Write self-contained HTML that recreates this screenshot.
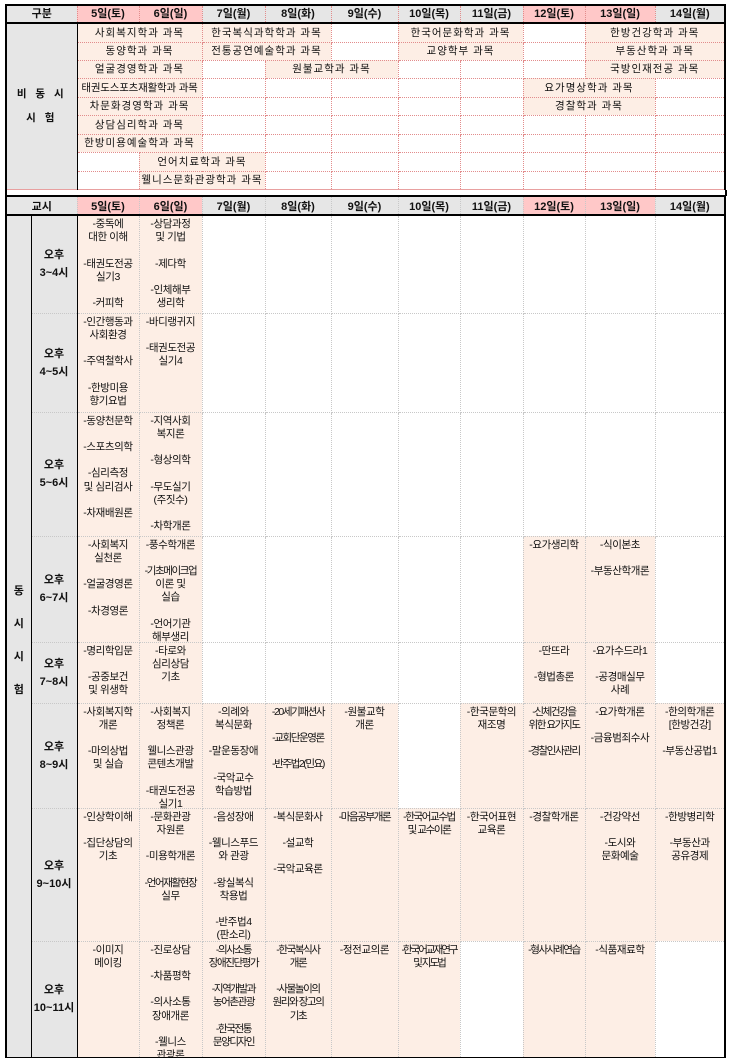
<!DOCTYPE html>
<html><head><meta charset="utf-8">
<style>
html,body{margin:0;padding:0;background:#fff;width:729px;height:1058px;overflow:hidden;position:relative}
body{font-family:"Liberation Sans","Noto Sans CJK KR",sans-serif;color:#111}
table{border-collapse:collapse;table-layout:fixed;position:absolute;left:5px;width:720px}
td{padding:0;text-align:center;white-space:nowrap;overflow:visible;font-size:10.5px}
.top td{border-top:1px dotted #e28c8c;border-bottom:1px dotted #e28c8c;border-left:1px dotted #e28c8c;border-right:1px dotted #e28c8c;vertical-align:middle;letter-spacing:1px;font-size:10.5px;line-height:12px}
.top{border:2px solid #000;border-bottom:1px solid #e8a0a0;top:4px}
.bot{border:2px solid #000;top:195px}
.bot td{border:1px dotted #c8c8c8;vertical-align:top}
.h td{font-weight:bold;font-size:11px;background:#e6e6e6;vertical-align:middle;border-bottom:2px solid #000;letter-spacing:0}
.h td.p{background:#ffc8c8}
.s{background:#fdeee5}
.lbl{background:#e6e6e6;font-weight:bold;border-right:1.5px solid #000 !important;letter-spacing:3px !important;line-height:24px !important;font-size:11px}
.c{height:0;overflow:visible;line-height:13.2px;padding-top:2px;letter-spacing:-0.4px}
.n{letter-spacing:-1.4px}
.t{background:#e6e6e6;font-weight:bold;font-size:11px;line-height:18px;vertical-align:middle !important;border-left:1.5px solid #000 !important;border-right:1.5px solid #000 !important}
.v{background:#e6e6e6;font-weight:bold;font-size:11px;line-height:33px;vertical-align:middle !important;padding-top:8px !important}
.gap{position:absolute;left:5px;top:190px;width:718px;height:6px;border-left:2px solid #000;border-right:2px solid #000}
</style></head><body>
<table class="top">
<colgroup><col style="width:71px"><col style="width:62px"><col style="width:63px"><col style="width:63px"><col style="width:66px"><col style="width:67px"><col style="width:62px"><col style="width:63px"><col style="width:62px"><col style="width:70px"><col style="width:70px"></colgroup>
<tr class="h" style="height:18px"><td>구분</td><td class="p">5일(토)</td><td class="p">6일(일)</td><td>7일(월)</td><td>8일(화)</td><td>9일(수)</td><td>10일(목)</td><td>11일(금)</td><td class="p">12일(토)</td><td class="p">13일(일)</td><td>14일(월)</td></tr>
<tr style="height:19px"><td rowspan="9" class="lbl">비 동 시<br>시 험</td><td colspan="2" class="s">사회복지학과 과목</td><td colspan="2" class="s">한국복식과학학과 과목</td><td></td><td colspan="2" class="s">한국어문화학과 과목</td><td></td><td colspan="2" class="s">한방건강학과 과목</td></tr>
<tr style="height:18px"><td colspan="2" class="s">동양학과 과목</td><td colspan="2" class="s">전통공연예술학과 과목</td><td></td><td colspan="2" class="s">교양학부 과목</td><td></td><td colspan="2" class="s">부동산학과 과목</td></tr>
<tr style="height:18px"><td colspan="2" class="s">얼굴경영학과 과목</td><td></td><td colspan="2" class="s">원불교학과 과목</td><td></td><td></td><td></td><td colspan="2" class="s">국방인재전공 과목</td></tr>
<tr style="height:19px"><td colspan="2" class="s" style="letter-spacing:-0.2px">태권도스포츠재활학과 과목</td><td></td><td></td><td></td><td></td><td></td><td colspan="2" class="s">요가명상학과 과목</td><td></td></tr>
<tr style="height:18px"><td colspan="2" class="s">차문화경영학과 과목</td><td></td><td></td><td></td><td></td><td></td><td colspan="2" class="s">경찰학과 과목</td><td></td></tr>
<tr style="height:19px"><td colspan="2" class="s">상담심리학과 과목</td><td></td><td></td><td></td><td></td><td></td><td></td><td></td><td></td></tr>
<tr style="height:18px"><td colspan="2" class="s">한방미용예술학과 과목</td><td></td><td></td><td></td><td></td><td></td><td></td><td></td><td></td></tr>
<tr style="height:19px"><td></td><td colspan="2" class="s">언어치료학과 과목</td><td></td><td></td><td></td><td></td><td></td><td></td><td></td></tr>
<tr style="height:18px"><td></td><td colspan="2" class="s">웰니스문화관광학과 과목</td><td></td><td></td><td></td><td></td><td></td><td></td><td></td></tr>
</table>
<div class="gap"></div>
<table class="bot">
<colgroup><col style="width:25px"><col style="width:46px"><col style="width:62px"><col style="width:63px"><col style="width:63px"><col style="width:66px"><col style="width:67px"><col style="width:62px"><col style="width:63px"><col style="width:62px"><col style="width:70px"><col style="width:70px"></colgroup>
<tr class="h" style="height:19px"><td colspan="2">교시</td><td class="p">5일(토)</td><td class="p">6일(일)</td><td>7일(월)</td><td>8일(화)</td><td>9일(수)</td><td>10일(목)</td><td>11일(금)</td><td class="p">12일(토)</td><td class="p">13일(일)</td><td>14일(월)</td></tr>
<tr style="height:98px"><td rowspan="8" class="v">동<br>시<br>시<br>험</td><td class="t">오후<br>3~4시</td>
<td class="s"><div class="c">-중독에<br>대한 이해<br><br>-태권도전공<br>실기3<br><br>-커피학</div></td>
<td class="s"><div class="c">-상담과정<br>및 기법<br><br>-제다학<br><br>-인체해부<br>생리학</div></td>
<td></td><td></td><td></td><td></td><td></td><td></td><td></td><td></td></tr>
<tr style="height:99px"><td class="t">오후<br>4~5시</td>
<td class="s"><div class="c">-인간행동과<br>사회환경<br><br>-주역철학사<br><br>-한방미용<br>향기요법</div></td>
<td class="s"><div class="c">-바디랭귀지<br><br>-태권도전공<br>실기4</div></td>
<td></td><td></td><td></td><td></td><td></td><td></td><td></td><td></td></tr>
<tr style="height:124px"><td class="t">오후<br>5~6시</td>
<td class="s"><div class="c">-동양천문학<br><br>-스포츠의학<br><br>-심리측정<br>및 심리검사<br><br>-차재배원론</div></td>
<td class="s"><div class="c">-지역사회<br>복지론<br><br>-형상의학<br><br>-무도실기<br>(주짓수)<br><br>-차학개론</div></td>
<td></td><td></td><td></td><td></td><td></td><td></td><td></td><td></td></tr>
<tr style="height:106px"><td class="t">오후<br>6~7시</td>
<td class="s"><div class="c">-사회복지<br>실천론<br><br>-얼굴경영론<br><br>-차경영론</div></td>
<td class="s"><div class="c">-풍수학개론<br><br><span class="n">-기초메이크업</span><br>이론 및<br>실습<br><br>-언어기관<br>해부생리</div></td>
<td></td><td></td><td></td><td></td><td></td>
<td class="s"><div class="c">-요가생리학</div></td>
<td class="s"><div class="c">-식이본초<br><br>-부동산학개론</div></td>
<td></td></tr>
<tr style="height:61px"><td class="t">오후<br>7~8시</td>
<td class="s"><div class="c">-명리학입문<br><br>-공중보건<br>및 위생학</div></td>
<td class="s"><div class="c">-타로와<br>심리상담<br>기초</div></td>
<td></td><td></td><td></td><td></td><td></td>
<td class="s"><div class="c">-딴뜨라<br><br>-형법총론</div></td>
<td class="s"><div class="c">-요가수드라1<br><br>-공경매실무<br>사례</div></td>
<td></td></tr>
<tr style="height:105px"><td class="t">오후<br>8~9시</td>
<td class="s"><div class="c">-사회복지학<br>개론<br><br>-마의상법<br>및 실습</div></td>
<td class="s"><div class="c">-사회복지<br>정책론<br><br>웰니스관광<br>콘텐츠개발<br><br>-태권도전공<br>실기1</div></td>
<td class="s"><div class="c">-의례와<br>복식문화<br><br>-말운동장애<br><br>-국악교수<br>학습방법</div></td>
<td class="s"><div class="c n">-20세기패션사<br><br>-교회단운영론<br><br>-반주법2(민요)</div></td>
<td class="s"><div class="c">-원불교학<br>개론</div></td>
<td></td>
<td class="s"><div class="c">-한국문학의<br>재조명</div></td>
<td class="s"><div class="c n">-신체건강을<br>위한 요가지도<br><br>-경찰인사관리</div></td>
<td class="s"><div class="c">-요가학개론<br><br>-금융범죄수사</div></td>
<td class="s"><div class="c">-한의학개론<br>[한방건강]<br><br>-부동산공법1</div></td></tr>
<tr style="height:133px"><td class="t">오후<br>9~10시</td>
<td class="s"><div class="c">-인상학이해<br><br>-집단상담의<br>기초</div></td>
<td class="s"><div class="c">-문화관광<br>자원론<br><br>-미용학개론<br><br><span class="n">-언어재활현장</span><br>실무</div></td>
<td class="s"><div class="c">-음성장애<br><br>-웰니스푸드<br>와 관광<br><br>-왕실복식<br>착용법<br><br>-반주법4<br>(판소리)</div></td>
<td class="s"><div class="c">-복식문화사<br><br>-설교학<br><br>-국악교육론</div></td>
<td class="s"><div class="c n">-마음공부개론</div></td>
<td class="s"><div class="c n">-한국어교수법<br>및 교수이론</div></td>
<td class="s"><div class="c">-한국어표현<br>교육론</div></td>
<td class="s"><div class="c">-경찰학개론</div></td>
<td class="s"><div class="c">-건강약선<br><br>-도시와<br>문화예술</div></td>
<td class="s"><div class="c">-한방병리학<br><br>-부동산과<br>공유경제</div></td></tr>
<tr style="height:117px"><td class="t">오후<br>10~11시</td>
<td class="s"><div class="c">-이미지<br>메이킹</div></td>
<td class="s"><div class="c">-진로상담<br><br>-차품평학<br><br>-의사소통<br>장애개론<br><br>-웰니스<br>관광론</div></td>
<td class="s"><div class="c n">-의사소통<br>장애진단평가<br><br>-지역개발과<br>농어촌관광<br><br>-한국전통<br>문양디자인</div></td>
<td class="s"><div class="c n">-한국복식사<br>개론<br><br>-사물놀이의<br>원리와 장고의<br>기초</div></td>
<td class="s"><div class="c">-정전교의론</div></td>
<td class="s"><div class="c n" style="letter-spacing:-2px">-한국어교재연구<br>및 지도법</div></td>
<td></td>
<td class="s"><div class="c n">-형사사례연습</div></td>
<td class="s"><div class="c">-식품재료학</div></td>
<td></td></tr>
</table>
</body></html>
